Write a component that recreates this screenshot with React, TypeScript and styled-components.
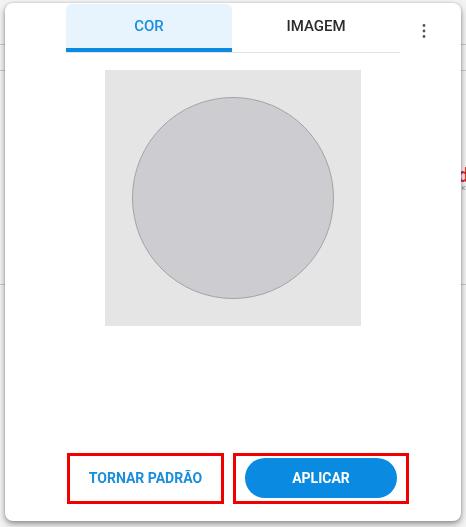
import React, { FunctionComponent, useState } from 'react';
import styled, { createGlobalStyle } from 'styled-components';

const GlobalStyle = createGlobalStyle`
	html, body {
		margin: 0;
		padding: 0;
		background: #f3f3f3;
		font-family: Roboto, 'Liberation Sans', sans-serif;
	}
`;

interface TabProps {
	active?: boolean;
}

interface FrameProps {
	width: number;
}

// page behind the dialog
const Page = styled.div`
	height: 527px;
	overflow: hidden;
	display: flex;
	flex-direction: column;
`;

const PageHeader = styled.div`
	height: 44px;
	border-bottom: 1px solid #c9c9c9;
`;

const PageToolbar = styled.div`
	height: 25px;
	border-bottom: 1px solid #c9c9c9;
`;

const PageBody = styled.div`
	height: 213px;
	border-bottom: 1px solid #c9c9c9;
	display: flex;
	justify-content: flex-end;
	align-items: center;
`;

const Brand = styled.div`
	display: flex;
	flex-direction: column;
	align-items: flex-end;
	gap: 2px;
	margin-right: -3px;
	margin-top: 2px;
	line-height: 1;
`;

const BrandMark = styled.span`
	color: #e0263a;
	font-size: 20px;
	line-height: 16px;
	font-weight: 700;
`;

const BrandTag = styled.span`
	color: #777;
	font-size: 6px;
	line-height: 6px;
`;

const Dialog = styled.div`
	position: fixed;
	left: 5px;
	top: 3px;
	width: 456px;
	height: 518px;
	background: #fff;
	border-radius: 8px;
	box-shadow: 0 3px 6px rgba(0, 0, 0, 0.4), 0 0 3px rgba(0, 0, 0, 0.15);
	display: flex;
	flex-direction: column;
	align-items: center;
`;

const Header = styled.div`
	width: 100%;
	display: grid;
	grid-template-columns: 1fr 334px 1fr;
	padding-top: 1px;
`;

const TabList = styled.div`
	grid-column: 2;
	display: flex;
	border-bottom: 1px solid #e2e2e2;
`;

const Tab = styled.button<TabProps>`
	flex: ${({ active }) => (active ? '0 0 166px' : '1')};
	height: 48px;
	border: none;
	border-radius: 6px 6px 0 0;
	background: ${({ active }) => (active ? '#e7f3fd' : 'transparent')};
	box-shadow: ${({ active }) => (active ? 'inset 0 -4px 0 #0a8ae0' : 'none')};
	color: ${({ active }) => (active ? '#1a8ddc' : '#2b2b2b')};
	font-family: Roboto, 'Liberation Sans', sans-serif;
	font-size: 15px;
	font-weight: 500;
	padding: 0 0 5px;
	cursor: pointer;
`;

const MenuButton = styled.button`
	grid-column: 3;
	justify-self: start;
	margin: 15px 0 0 12px;
	width: 24px;
	height: 24px;
	border: none;
	background: none;
	padding: 0;
	display: flex;
	align-items: center;
	justify-content: center;
	color: #555;
`;

const Preview = styled.div`
	margin-top: 17px;
	width: 256px;
	height: 256px;
	background: #e5e5e5;
	display: flex;
	align-items: center;
	justify-content: center;
`;

const Swatch = styled.div`
	width: 200px;
	height: 200px;
	border-radius: 50%;
	background: #cdccd0;
	border: 1px solid #a3a3a6;
`;

const Footer = styled.div`
	margin-top: auto;
	align-self: stretch;
	display: flex;
	gap: 9px;
	padding: 0 0 17px 62px;
`;

const Frame = styled.div<FrameProps>`
	width: ${({ width }) => width}px;
	height: 51px;
	box-sizing: border-box;
	border: 3px solid #f20000;
	display: flex;
	align-items: center;
	justify-content: center;
	padding: 2px 9px 4px;
`;

const TextButton = styled.button`
	border: none;
	background: none;
	color: #1a8ddc;
	font-family: Roboto, 'Liberation Sans', sans-serif;
	font-size: 14px;
	font-weight: 700;
	padding: 0;
	cursor: pointer;
`;

const PillButton = styled.button`
	width: 100%;
	height: 40px;
	border: none;
	border-radius: 20px;
	background: #0a8ae0;
	color: #fff;
	font-family: Roboto, 'Liberation Sans', sans-serif;
	font-size: 14px;
	font-weight: 700;
	cursor: pointer;
`;

const KebabIcon = () => (
	<svg width='6' height='16' viewBox='0 0 6 16'>
		<circle cx='3' cy='2.5' r='1.4' fill='currentColor' />
		<circle cx='3' cy='8' r='1.4' fill='currentColor' />
		<circle cx='3' cy='13.5' r='1.4' fill='currentColor' />
	</svg>
);

const App: FunctionComponent = () => {
	const [tab, setTab] = useState<'cor' | 'imagem'>('cor');

	return (
		<>
			<GlobalStyle />
			<Page>
				<PageHeader />
				<PageToolbar />
				<PageBody>
					<Brand>
						<BrandMark>d</BrandMark>
						<BrandTag>KT</BrandTag>
					</Brand>
				</PageBody>
			</Page>
			<Dialog>
				<Header>
					<TabList>
						<Tab active={tab === 'cor'} onClick={() => setTab('cor')}>
							COR
						</Tab>
						<Tab active={tab === 'imagem'} onClick={() => setTab('imagem')}>
							IMAGEM
						</Tab>
					</TabList>
					<MenuButton>
						<KebabIcon />
					</MenuButton>
				</Header>
				<Preview>
					<Swatch />
				</Preview>
				<Footer>
					<Frame width={157}>
						<TextButton>TORNAR PADRÃO</TextButton>
					</Frame>
					<Frame width={176}>
						<PillButton>APLICAR</PillButton>
					</Frame>
				</Footer>
			</Dialog>
		</>
	);
};

export default App;
